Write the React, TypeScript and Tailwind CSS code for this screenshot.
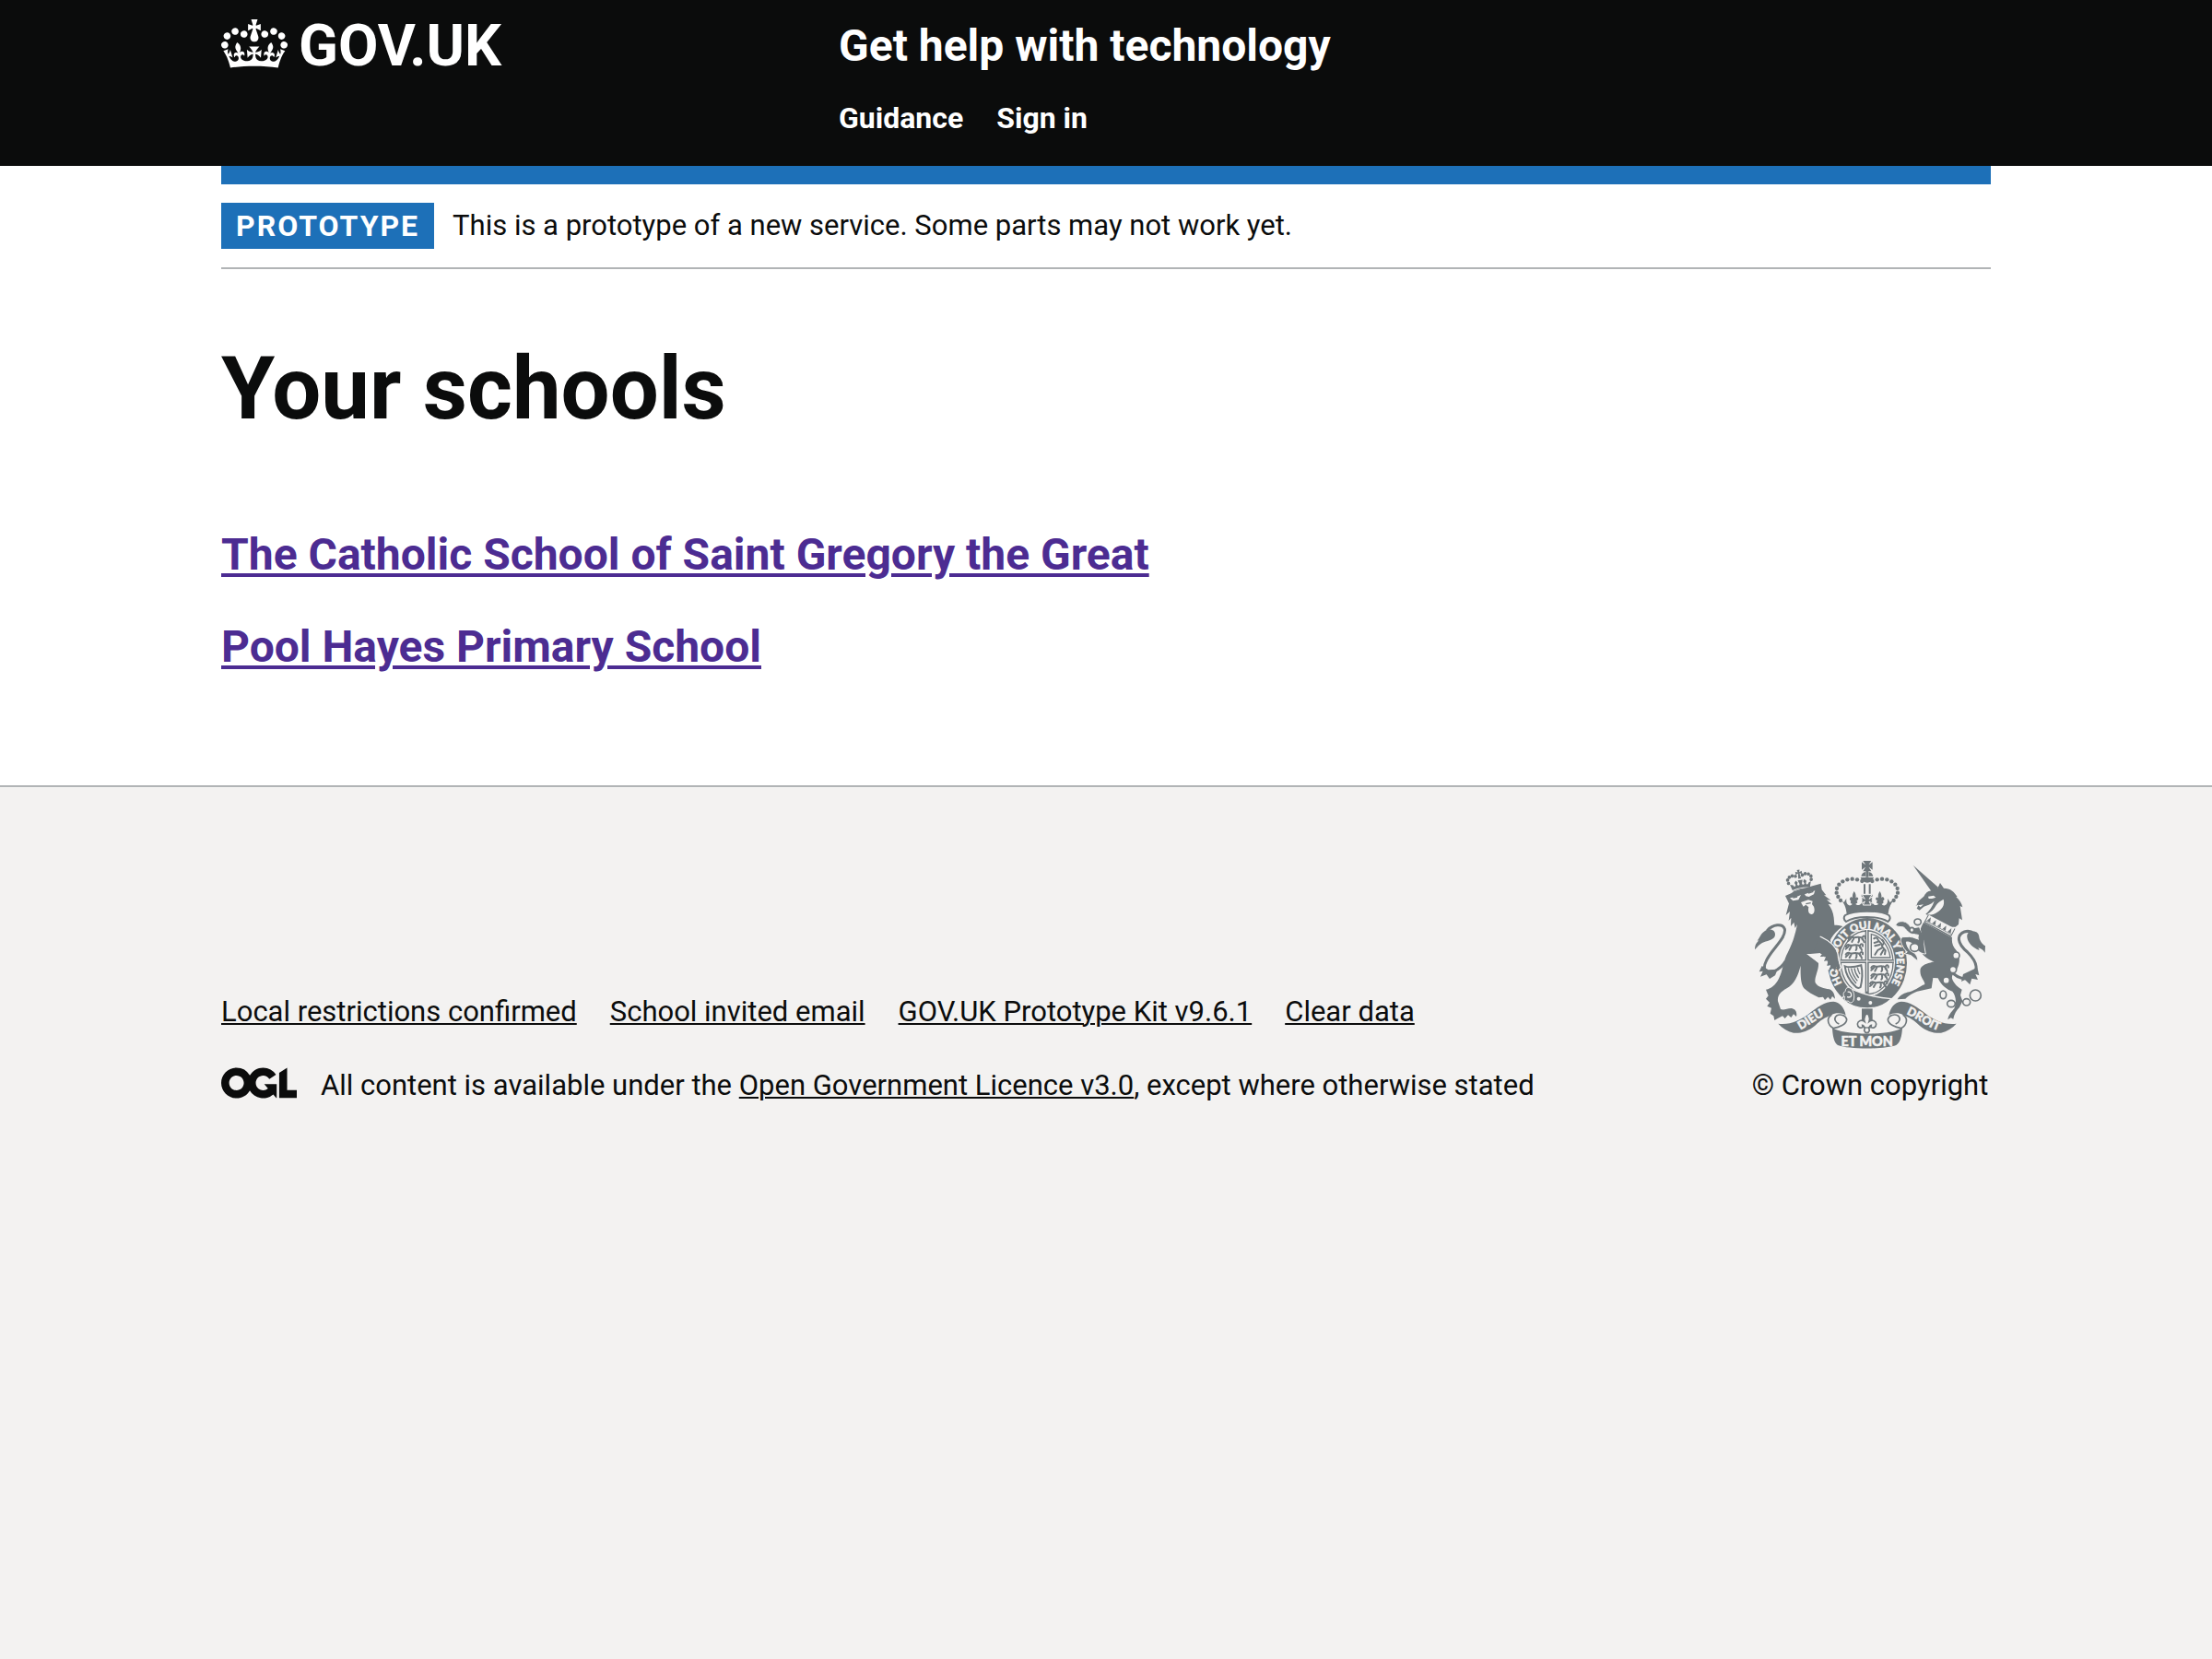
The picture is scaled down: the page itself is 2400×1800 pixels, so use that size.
import React from "react";

const footerLinks = [
  "Local restrictions confirmed",
  "School invited email",
  "GOV.UK Prototype Kit v9.6.1",
  "Clear data",
];

const schools = [
  "The Catholic School of Saint Gregory the Great",
  "Pool Hayes Primary School",
];

function CrownLogo() {
  return (
    <svg aria-hidden="true" viewBox="0 0 132 97" className="mt-px h-[53px] w-[72px]" fill="currentColor">
      <path
        fillRule="evenodd"
        d="M25 30.2c3.5 1.5 7.7-.2 9.1-3.7 1.5-3.6-.2-7.8-3.9-9.2-3.6-1.4-7.6.3-9.1 3.9-1.4 3.5.3 7.5 3.9 9zM9 39.5c3.6 1.5 7.8-.2 9.2-3.7 1.5-3.6-.2-7.8-3.9-9.1-3.6-1.5-7.6.2-9.1 3.8-1.4 3.5.3 7.5 3.8 9zM4.4 57.2c3.5 1.5 7.7-.2 9.1-3.8 1.5-3.6-.2-7.7-3.9-9.1-3.5-1.5-7.6.3-9.1 3.8-1.4 3.5.3 7.6 3.9 9.1zm38.3-21.4c3.5 1.5 7.7-.2 9.1-3.8 1.5-3.6-.2-7.7-3.9-9.1-3.6-1.5-7.6.3-9.1 3.8-1.3 3.6.4 7.7 3.9 9.1zm64.4-5.6c-3.6 1.5-7.8-.2-9.1-3.7-1.5-3.6.2-7.8 3.8-9.2 3.6-1.4 7.7.3 9.2 3.9 1.3 3.5-.4 7.5-3.9 9zm15.9 9.3c-3.6 1.5-7.7-.2-9.1-3.7-1.5-3.6.2-7.8 3.7-9.1 3.6-1.5 7.7.2 9.2 3.8 1.5 3.5-.3 7.5-3.8 9zm4.7 17.7c-3.6 1.5-7.8-.2-9.2-3.8-1.5-3.6.2-7.7 3.9-9.1 3.6-1.5 7.7.3 9.2 3.8 1.3 3.5-.4 7.6-3.9 9.1zM89.3 35.8c-3.6 1.5-7.8-.2-9.2-3.8-1.4-3.6.2-7.7 3.9-9.1 3.6-1.5 7.7.3 9.2 3.8 1.4 3.6-.3 7.7-3.9 9.1zM69.7 17.7l8.9 4.7V9.3l-8.9 2.8c-.2-.3-.5-.6-.9-.9L72.4 0H59.6l3.5 11.2c-.3.3-.6.5-.9.9l-8.8-2.8v13.1l8.8-4.7c.3.3.6.7.9.9l-5 15.4v.1c-.2.8-.4 1.6-.4 2.4 0 4.1 3.1 7.5 7 8.1h.2c.3 0 .7.1 1 .1.4 0 .7 0 1-.1h.2c4-.6 7.1-4.1 7.1-8.1 0-.8-.1-1.7-.4-2.4V34l-5.1-15.4c.4-.2.7-.6 1-.9zM66 92.8c16.9 0 32.8 1.1 47.1 3.2 4-16.9 8.9-26.7 14-33.5l-9.6-3.4c1 4.9 1.1 7.2 0 10.2-1.5-1.4-3-4.3-4.2-8.7L108.6 76c2.8-2 5-3.2 7.5-3.3-4.4 9.4-10 11.9-13.6 11.2-4.3-.8-6.3-4.6-5.6-7.9 1-4.7 5.7-5.9 8-.5 4.3-8.7-3-11.4-7.6-8.8 7.1-7.2 7.9-13.5 2.1-21.1-8 6.1-8.1 12.3-4.5 20.8-4.7-5.4-12.1-2.5-9.5 6.2 3.4-5.2 7.9-2 7.2 3.1-.6 4.3-6.4 7.8-13.5 7.2-10.3-.9-10.9-8-11.2-13.8 2.5-.5 7.1 1.8 11 7.3L80.2 60c-4.1 4.4-8 5.3-12.3 5.4 1.4-4.4 8-11.6 8-11.6H55.5s6.4 7.2 7.9 11.6c-4.2-.1-8-1-12.3-5.4l1.4 16.4c3.9-5.5 8.5-7.7 10.9-7.3-.3 5.8-.9 12.8-11.1 13.8-7.2.6-12.9-2.9-13.5-7.2-.7-5 3.8-8.3 7.1-3.1 2.7-8.7-4.6-11.6-9.4-6.2 3.7-8.5 3.6-14.7-4.6-20.8-5.8 7.6-5 13.9 2.2 21.1-4.7-2.6-11.9.1-7.7 8.8 2.3-5.5 7.1-4.2 8.1.5.7 3.3-1.3 7.1-5.7 7.9-3.5.7-9-1.8-13.5-11.2 2.5.1 4.7 1.3 7.5 3.3l-4.7-15.4c-1.2 4.4-2.7 7.2-4.3 8.7-1.1-3-.9-5.3 0-10.2l-9.5 3.4c5 6.9 9.9 16.7 14 33.5 14.8-2.1 30.8-3.2 47.7-3.2z"
      />
    </svg>
  );
}

function LicenceLogo() {
  return (
    <svg aria-hidden="true" viewBox="0 0 483.2 195.7" className="h-[34px] w-[82px] shrink-0" fill="currentColor">
      <path d="M421.5 142.8V.1l-50.7 32.3v161.1h112.4v-50.7zm-122.3-9.6A47.12 47.12 0 0 1 221 97.8c0-26 21.1-47.1 47.1-47.1 16.7 0 31.4 8.7 39.7 21.8l42.7-27.2A97.63 97.63 0 0 0 268.1 0c-36.5 0-68.3 20.1-85.1 49.7A98 98 0 0 0 97.8 0C43.9 0 0 43.9 0 97.8s43.9 97.8 97.8 97.8c36.5 0 68.3-20.1 85.1-49.7a97.76 97.76 0 0 0 149.6 25.4l19.4 22.2h3v-87.8h-80l24.3 27.5zM97.8 145c-26 0-47.1-21.1-47.1-47.1s21.1-47.1 47.1-47.1 47.1 21.1 47.1 47.1S123.8 145 97.8 145" />
    </svg>
  );
}

const GREY = "#6f777b";
const PAPER = "#f3f2f1";

/* Beads along one arch of the centre crown; the other arch mirrors them. */
const archBeads = [
  [421, 109],
  [405, 104],
  [389, 102],
  [373, 104],
  [358, 110],
  [346, 120],
  [339, 133],
  [338, 147],
  [343, 160],
  [351, 172],
];

const smallCrownBeads = [
  [181, 110],
  [180, 99],
  [187, 91],
  [197, 88],
  [207, 91],
  [230, 91],
  [240, 88],
  [250, 91],
  [257, 99],
  [256, 110],
];

function ArmsCrown() {
  return (
    <g>
      <path d="M424 43h27l-8 12h1l11-8v25l-11-8h-1l8 13h-27l8-13h-1l-11 8V47l11 8h1z" />
      <path d="M433 76h9v20h-9zM418 93c2-9 8-13 14-14v14zM457 93c-2-9-8-13-14-14v14z" />
      <path d="M416 97h43c-3 11-11 17-21 17s-19-6-22-17z" />
      <path d="M426 119h6v31h-6zM443 119h6v31h-6z" />
      {archBeads.map(([x, y]) => (
        <g key={`${x}-${y}`}>
          <circle cx={x} cy={y} r="6.5" />
          <circle cx={875 - x} cy={y} r="6.5" />
        </g>
      ))}
      {/* Rim with leaves */}
      <path d="M350 168l12 10c2-3 5-8 8-12-1 8 0 14 4 19 4 5 13 4 15-2-6-1-7-6-4-11-5 0-6-6-2-10 3-3 6 0 7 2-1-9 1-15 5-22 5 7 7 13 5 22 2-3 6-4 8 0 2 5-1 8-5 8 5 5 3 10-3 11 5 7 15 5 19-3 2-4 2-8 1-12l-1-15h36l-1 15c-1 4-1 8 1 12 4 8 14 10 19 3-6-1-8-6-3-11-4 0-7-3-5-8 2-4 6-3 8 0-2-9 0-15 5-22 4 7 6 13 5 22 1-2 4-5 7-2 4 4 3 10-2 10 3 5 2 10-4 11 2 6 11 7 15 2 4-5 5-11 4-19 3 4 6 9 8 12l13-10c-10 14-17 26-19 48-18-7-40-11-65-11s-52 4-70 11c-2-22-8-34-19-48z" />
      <path d="M421 153h32l-9 14 10-7v22l-10-7 6 12h-26l6-12-10 7v-22l10 7z" stroke={PAPER} strokeWidth="3" />
      <path d="M366 220c16-9 40-13 71-13s55 4 71 13c6 6 5 15-3 21-16-11-38-15-68-15s-52 4-68 15c-8-6-9-15-3-21z" fill={PAPER} stroke={GREY} strokeWidth="6" />
    </g>
  );
}

function LionPassant({ x, y }: { x: number; y: number }) {
  return (
    <g transform={`translate(${x} ${y})`}>
      <path
        d="M2 9c3-6 8-7 12-5 6 4 14-1 22 0 8 0 13 4 15 10M48 5c5-8 11-3 9 3M12 6c-1 5-6 6-10 11M20 7c0 5-5 8-6 13M37 8c-1 5 3 6-2 13M48 12c5 2 5 5 6 9"
        fill="none"
        stroke={GREY}
        strokeWidth="6"
        strokeLinecap="round"
      />
    </g>
  );
}

function Shield() {
  return (
    <g>
      <ellipse cx="438" cy="375" rx="129" ry="146" />
      <ellipse cx="437" cy="374" rx="91" ry="110" fill={PAPER} />
      <ellipse cx="437" cy="374" rx="85" ry="103" fill="none" stroke={GREY} strokeWidth="4" />
      <path d="M437 268v215M350 370h174" stroke={GREY} strokeWidth="12" fill="none" />
      <path d="M437 268v200M350 370h174" stroke={PAPER} strokeWidth="3" fill="none" />
      <LionPassant x={374} y={287} />
      <LionPassant x={366} y={313} />
      <LionPassant x={366} y={339} />
      <LionPassant x={449} y={382} />
      <LionPassant x={449} y={408} />
      <LionPassant x={445} y={434} />
      {/* Rampant lion in its double border */}
      <path d="M451 282c30 6 56 34 62 76h-62z" fill="none" stroke={GREY} strokeWidth="4" />
      <path d="M460 296c6-5 12-2 13 5 8 6 12 14 14 22l10 12-2 12M474 306l-13 4M478 316l-15 4M486 326l-14 8-9 14M490 334l-8 14M486 318c8-6 6-14 0-18" fill="none" stroke={GREY} strokeWidth="6" strokeLinecap="round" />
      {/* Harp */}
      <path d="M365 386c16 6 36 2 53-3 5 22 4 47-2 71-6 5-13 3-18-4-18-17-30-38-33-64z" fill="none" stroke={GREY} strokeWidth="6" />
      <path d="M376 392c2 17 12 34 26 50M386 393c2 14 9 28 20 41M396 392c1 12 6 22 14 32M406 390c1 8 4 15 8 22" fill="none" stroke={GREY} strokeWidth="4" />
      {/* Motto on the garter */}
      <path id="garter-line" d="M437 492C382 492 338 438 338 375S382 264 437 264S534 315 534 375S492 492 437 492" fill="none" pathLength={100} />
      <text
        fill={PAPER}
        stroke={PAPER}
        strokeWidth="1.5"
        fontFamily="Lato, 'Liberation Sans', sans-serif"
        fontWeight="900"
        fontSize="34"
      >
        <textPath href="#garter-line" startOffset="15">
          HONI SOIT QUI MAL Y PENSE
        </textPath>
      </text>
      {/* Strap and buckle */}
      <path d="M378 456c40 20 84 32 138 36-20 20-48 31-78 31-31 0-60-10-82-31z" stroke={PAPER} strokeWidth="4" />
      <path d="M384 458c-10-6-18 0-17 9-8 4-9 14-2 19-4 9 2 16 11 13 4 8 14 7 17-1 4-14 3-30-9-40z" stroke={PAPER} strokeWidth="3" />
      <path d="M374 470c8-2 13 3 12 12M372 486c7 2 12 0 14-4" fill="none" stroke={PAPER} strokeWidth="4" />
      <circle cx="410" cy="492" r="6" fill={PAPER} />
      <circle cx="448" cy="505" r="6" fill={PAPER} />
    </g>
  );
}

function Lion() {
  return (
    <g>
      {/* Small crown */}
      <g transform="rotate(-10 218 110)">
        <path d="M185 115l10 4c1 6 7 6 8 0l-3-7 6-7 5 7-3 7c2 5 8 4 8-1l-4-12h16l-4 12c0 5 6 6 8 1l-3-7 5-7 6 7-3 7c1 6 7 6 8 0l9-4-8 24c-17-4-38-4-55 0z" />
        <path d="M190 136c18-5 40-5 58 0" stroke={PAPER} strokeWidth="3" fill="none" />
        {smallCrownBeads.map(([x, y]) => (
          <circle key={`${x}-${y}`} cx={x} cy={y} r="5.5" />
        ))}
        <path d="M215 72h9l-2 8 8-3v10l-8-3 2 17h-9l2-17-8 3V77l8 3z" />
      </g>
      {/* Tail */}
      <path d="M112 270c18-20 50-25 57-5 6 30-45 68-60 104-14 28 0 46 25 34 16-8 30-20 38-34" fill="none" stroke={GREY} strokeWidth="9" />
      <path d="M72 332c0-16 6-24 14-30l-6 1c10-14 12-24 25-32 14-9 33-4 33 11 0 20-26 20-42 28-10 5-14 12-24 22z" />
      <path d="M95 385L86 404L98 402L90 420L110 413L120 427L138 416L146 396L116 398Z" />
      {/* Head, mane, body and rear legs */}
      <path d="M171 157L190 149L200 142L262 124L287 117L290 137L304 155L297 155L319 171L306 170L323 185L311 184C321 197 327 210 329 228L331 252C340 252 350 253 358 256C338 270 325 286 318 300L322 336L300 346L240 346L262 362L279 376C281 398 264 424 269 440C278 456 298 458 314 461C326 464 332 478 333 492L324 484L318 495L310 486L300 496L294 486L280 488C262 480 244 470 232 458C222 446 220 420 221 384C212 420 200 444 176 458C156 470 145 480 147 500L156 526C168 530 178 522 192 523C206 526 210 538 207 550L198 542L190 553L180 545L170 556L162 548L146 556L136 562L133 548L122 540L126 522L112 516L120 504L108 492L116 482L108 462C126 458 140 446 150 426C164 400 163 370 180 340C196 308 204 280 210 250L203 262L199 243L189 256L190 228L182 238L186 208L173 220L183 182Z" />
      <path d="M186 164L208 160L222 154L214 170L196 173ZM234 152L268 140L264 152L248 160L238 158Z" fill={PAPER} />
      <path d="M222 178L246 170L260 174L258 184L264 192C268 204 266 214 258 217C248 218 244 208 247 194L238 186L230 192Z" fill={PAPER} />
      <path d="M196 163L210 160M246 148L262 143M238 183L254 180" stroke={GREY} strokeWidth="4" fill="none" />
      {/* Raised foreleg resting on the garter */}
      <path d="M280 292C312 300 334 318 340 345C341 364 345 378 351 390L343 398L338 388L333 402L325 391L317 399L318 382L306 385L311 370L296 372L303 356L284 356L292 344L262 342Z" />
      <path d="M284 289C312 302 336 318 342 345C343 364 347 376 353 390L345 401M339 404L333 405" fill="none" stroke={PAPER} strokeWidth="4" />
      <path d="M244 347L286 343L284 356L298 354L294 370L308 368L304 384L316 384L314 398C300 396 292 400 286 396L284 376C270 368 256 360 244 347Z" fill={PAPER} />
    </g>
  );
}

function Unicorn() {
  return (
    <g>
      {/* Tail */}
      <path d="M704 394c22 30 50 38 68 28 30-20 26-48-8-82-34-28-36-56-10-66 12-4 22-2 32 6" fill="none" stroke={GREY} strokeWidth="9" />
      <path d="M768 276c18-8 32-2 34 14 1 14 12 26 20 30l-1 22c-6-10-14-14-22-16l4 8c-22-8-38-24-40-42-1-8 1-12 5-16z" />
      <path d="M796 390L802 416L790 412L798 430L778 426L772 446L756 430L744 436L750 412Z" />
      {/* Horn */}
      <path d="M587 57l82 72-8 18-14-4z" />
      {/* Head and mane */}
      <path d="M599 186c4-14 16-20 24-28 6-12 14-18 28-18l14-4 10-21 12 17c22 0 34 12 44 28l-4 0c12 12 18 20 21 34l-8-4 7 46-10-6-2 20-10 8-24 0-40-22-33-20c12-10 22-24 28-42-12 12-24 14-34 18l-14 12-9-6 6-12-10 3z" />
      <path d="M636 159l18-3 7 6c-10 4-16 4-23 4zM604 188l17-3-10 9zM686 168c6 22-8 34-20 42-10 8-24 10-34 8 14-8 24-18 30-30 4-8 14-14 24-20z" fill={PAPER} />
      {/* Body and hind legs */}
      <path d="M621 243L714 292C712 310 716 320 728 335C741 352 740 376 730 395C722 408 712 414 714 426C720 444 735 455 746 462L741 480L748 500L738 520C728 530 722 540 718 558L710 554L700 560C702 545 712 535 721 524C729 505 727 482 715 468C697 462 680 450 668 425L652 424L647 458L600 468C580 475 570 485 562 492L536 494C545 480 560 472 575 470C600 462 610 450 624 446C630 436 606 424 611 394C620 378 640 376 656 371C640 366 618 355 609 330C600 305 603 275 621 243Z" />
      {/* Coronet collar */}
      <g transform="translate(622 244) rotate(28)">
        <path d="M0-30h100v30H0z" fill={PAPER} />
        <path d="M0-4h100v4H0zM0-9h100v2H0zM0-30h3v30H0zM97-30h3v30h-3z" />
        <path d="M6-10l6-16 6 16zM25-10l6-16 6 16zM44-10l6-16 6 16zM63-10l6-16 6 16zM82-10l6-16 6 16z" />
      </g>
      {/* Forelegs */}
      <g stroke={PAPER} strokeWidth="3">
        <path d="M616 290C600 280 590 284 578 279C566 273 564 264 556 259C548 256 540 260 530 253C534 242 546 238 558 241C572 245 576 256 582 262C590 262 598 258 608 258Z" />
        <path d="M620 300C604 302 590 290 575 290L552 291C545 296 546 308 552 318C556 328 562 334 568 340L558 345L580 351L602 369C603 352 592 342 581 338C572 330 566 318 565 307C576 306 586 312 592 322C602 338 614 346 628 346Z" />
      </g>
      <path d="M606 262L622 290V344L606 330Z" />
      {/* Chain */}
      <g fill={PAPER} stroke={GREY} strokeWidth="5">
        <ellipse cx="602" cy="242" rx="11" ry="10" />
        <ellipse cx="583" cy="268" rx="7" ry="8" />
        <ellipse cx="592" cy="325" rx="14" ry="13" />
        <circle cx="727" cy="351" r="11" />
        <circle cx="717" cy="397" r="11" />
        <circle cx="695" cy="432" r="11" />
        <ellipse cx="685" cy="479" rx="10" ry="13" />
        <ellipse cx="711" cy="508" rx="13" ry="11" />
        <ellipse cx="761" cy="503" rx="12" ry="11" />
        <circle cx="790" cy="481" r="18" />
      </g>
    </g>
  );
}

function SideRibbon() {
  return (
    <>
      <path d="M148 573C190 577 215 563 245 543C275 519 300 501 328 501C350 503 364 522 368 546C354 537 334 537 322 545C300 553 285 563 268 579C245 598 220 605 198 603C178 598 162 588 148 573Z" />
      <path
        d="M322 545C306 553 306 576 328 588C345 585 371 576 371 559C368 546 350 540 338 547C328 556 332 568 346 574"
        fill={PAPER}
        stroke={GREY}
        strokeWidth="5"
      />
    </>
  );
}

function Ribbons() {
  return (
    <g>
      {/* Fleur-de-lis */}
      <path d="M420 524h35v40h-35z" />
      <path d="M437 538c-8 8-12 16-8 28-10-8-22-2-23 8 0 10 10 16 17 10l-1-6c4 0 6 6 8 8l-2 10c3 9 14 9 17 0l-2-10c2-2 4-8 8-8l-1 6c7 6 17 0 17-10-1-10-13-16-23-8 4-12 1-20-7-28z" fill={PAPER} stroke={GREY} strokeWidth="5" />
      <path d="M426 586h23" stroke={GREY} strokeWidth="4" />
      <SideRibbon />
      <g transform="translate(876 0) scale(-1 1)">
        <SideRibbon />
      </g>
      <path d="M324 586C356 612 520 612 552 586C551 612 545 636 532 643C495 657 378 657 342 643C330 636 325 612 324 586Z" />
      <path id="left-ribbon" d="M200 600C240 590 262 560 318 539" fill="none" />
      <path id="right-ribbon" d="M554 537C612 560 634 588 680 598" fill="none" />
      <g
        fill={PAPER}
        stroke={PAPER}
        strokeWidth="1.5"
        fontFamily="Lato, 'Liberation Sans', sans-serif"
        fontWeight="900"
        textAnchor="middle"
      >
        <text x="437" y="645" fontSize="43">
          ET MON
        </text>
        <text fontSize="38">
          <textPath href="#left-ribbon" startOffset="50%">DIEU</textPath>
        </text>
        <text fontSize="38">
          <textPath href="#right-ribbon" startOffset="50%">DROIT</textPath>
        </text>
      </g>
    </g>
  );
}

function RoyalArms() {
  return (
    <svg aria-hidden="true" viewBox="72 40 750 615" className="h-[205px] w-[250px]" fill={GREY}>
      <Shield />
      <ArmsCrown />
      <Lion />
      <Unicorn />
      <Ribbons />
    </svg>
  );
}

function Container({ className = "", children }: { className?: string; children: React.ReactNode }) {
  return (
    <div className="px-8">
      <div className={`mx-auto w-full max-w-[1920px] ${className}`}>{children}</div>
    </div>
  );
}

export default function App() {
  return (
    <div className="min-h-screen bg-[#f3f2f1] font-['Roboto','Liberation_Sans',sans-serif] text-[31px] leading-[40px] text-[#0b0c0c]">
      <header className="bg-[#0b0c0c] text-white">
        <Container className="flex flex-wrap py-5">
          <div className="w-1/3">
            <a href="#home" className="inline-flex items-start gap-3 text-[63px] leading-[60px] font-bold">
              <CrownLogo />
              <span>GOV.UK</span>
            </a>
          </div>
          <div className="w-2/3 pl-[30px]">
            <a href="#service" className="block text-[48px] leading-[60px] font-bold">
              Get help with technology
            </a>
            <nav aria-label="Menu" className="mt-7 flex gap-9 pb-3 text-[32px] font-bold">
              <a href="#guidance">Guidance</a>
              <a href="#sign-in">Sign in</a>
            </nav>
          </div>
        </Container>
      </header>

      <div className="bg-white">
        <Container>
          <div className="h-5 bg-[#1d70b8]" />
          <div className="flex items-center gap-5 border-b-2 border-[#b1b4b6] py-5">
            <strong className="bg-[#1d70b8] px-4 py-[5px] text-[32px] font-bold tracking-[2px] text-white">
              PROTOTYPE
            </strong>
            <span>This is a prototype of a new service. Some parts may not work yet.</span>
          </div>
          <main className="pt-20 pb-[120px]">
            <h1 className="text-[94px] leading-[100px] font-bold">Your schools</h1>
            <ul className="mt-[100px] flex flex-col gap-10 text-[48px] leading-[60px] font-bold">
              {schools.map((school) => (
                <li key={school}>
                  <a href="#school" className="text-[#4c2c92] underline decoration-4 underline-offset-4">
                    {school}
                  </a>
                </li>
              ))}
            </ul>
          </main>
        </Container>
      </div>

      <footer className="border-t-2 border-[#b1b4b6]">
        <Container className="flex items-end justify-between gap-15 pt-[79px] pb-[50px]">
          <div>
            <ul className="flex flex-wrap gap-x-9">
              {footerLinks.map((label) => (
                <li key={label}>
                  <a href="#footer" className="underline decoration-2 underline-offset-2">
                    {label}
                  </a>
                </li>
              ))}
            </ul>
            <div className="mt-10 flex gap-[26px]">
              <LicenceLogo />
              <p>
                All content is available under the{" "}
                <a href="#licence" className="underline decoration-2 underline-offset-2">
                  Open Government Licence v3.0
                </a>
                , except where otherwise stated
              </p>
            </div>
          </div>
          <a href="#copyright" className="flex min-w-[262px] shrink-0 flex-col items-center gap-5">
            <RoyalArms />
            <span>© Crown copyright</span>
          </a>
        </Container>
      </footer>
    </div>
  );
}
